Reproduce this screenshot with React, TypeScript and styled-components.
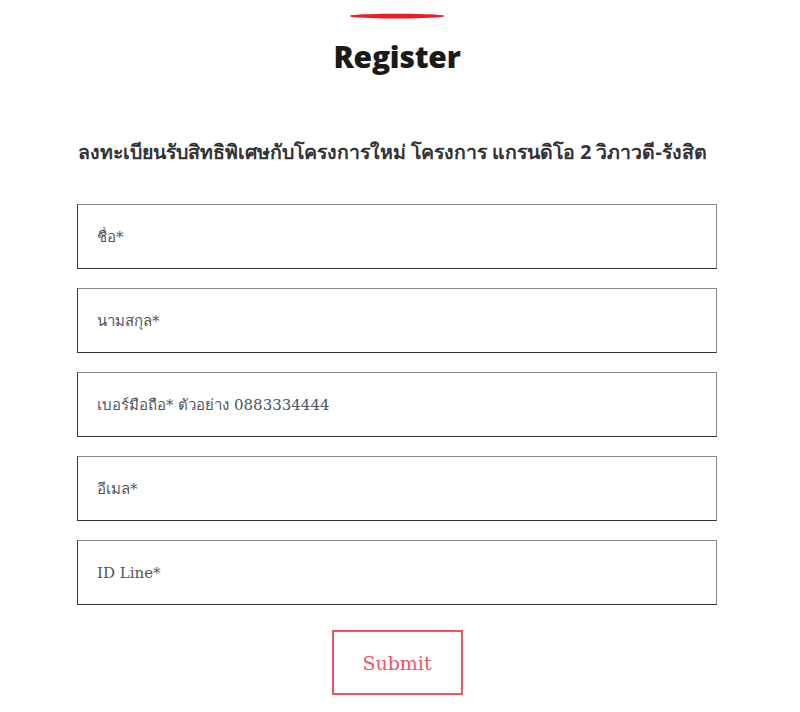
import React from "react";
import styled, { createGlobalStyle } from "styled-components";

const Global = createGlobalStyle`
  html, body { margin: 0; padding: 0; background: #fff; }
  body { font-family: "Liberation Sans", "Noto Sans", sans-serif; }
  * { box-sizing: border-box; }
`;

const Page = styled.div`
  width: 800px;
  height: 712px;
  overflow: hidden;
  display: flex;
  flex-direction: column;
`;

const Header = styled.header`
  display: flex;
  flex-direction: column;
  align-items: center;
  padding-top: 12px;
  margin-left: -6px;
`;

const Accent = styled.svg`
  display: block;
  width: 96px;
  height: 8px;
`;

const Title = styled.h1`
  margin: 17px 0 0;
  font-family: "Open Sans", "Noto Sans", sans-serif;
  font-weight: 800;
  font-size: 30px;
  line-height: 40px;
  color: #1a1a1a;
  letter-spacing: -0.2px;
`;

const Form = styled.form`
  width: 640px;
  margin-left: 77px;
  display: flex;
  flex-direction: column;
`;

const Lead = styled.p`
  margin: 62px 0 0;
  font-family: Tahoma, "Noto Sans", "DejaVu Sans", sans-serif;
  font-weight: 700;
  font-size: 19.5px;
  line-height: 26px;
  color: #333;
  padding-left: 1px;
  white-space: nowrap;
`;

const Fields = styled.div`
  margin-top: 39px;
  display: flex;
  flex-direction: column;
  gap: 19px;
`;

const Input = styled.input`
  display: block;
  width: 640px;
  height: 65px;
  padding: 0 19px;
  border: 1px solid #333;
  border-top-color: #8a8a8a;
  border-right-color: #8a8a8a;
  border-radius: 0;
  background: #fff;
  font-family: "DejaVu Serif", "Liberation Serif", serif;
  font-size: 15px;
  color: #333;
  outline: none;
  &::placeholder {
    color: #4c5560;
    opacity: 1;
  }
`;

const Actions = styled.div`
  display: flex;
  justify-content: center;
  margin-top: 25px;
  margin-left: 0;
`;

const Submit = styled.button`
  width: 131px;
  height: 65px;
  background: #fff;
  border: 2px solid #f2545f;
  color: #f2545f;
  font-family: "DejaVu Serif", "Liberation Serif", serif;
  font-size: 19px;
  cursor: pointer;
`;

const fields = [
  "ชื่อ*",
  "นามสกุล*",
  "เบอร์มือถือ* ตัวอย่าง 0883334444",
  "อีเมล*",
  "ID Line*",
];

export default function App() {
  return (
    <Page>
      <Global />
      <Header>
        <Accent viewBox="0 0 96 8">
          <path
            d="M2 3.2 C20 1.2 76 1.2 94 3.2 C95.5 3.5 95.5 4.4 94 4.8 C76 7.2 20 7.2 2 4.8 C0.5 4.4 0.5 3.5 2 3.2 Z"
            fill="#ec1c24"
          />
        </Accent>
        <Title>Register</Title>
      </Header>
      <Form onSubmit={(e) => e.preventDefault()}>
        <Lead>ลงทะเบียนรับสิทธิพิเศษกับโครงการใหม่ โครงการ แกรนดิโอ 2 วิภาวดี-รังสิต</Lead>
        <Fields>
          {fields.map((f) => (
            <Input key={f} type="text" placeholder={f} />
          ))}
        </Fields>
        <Actions>
          <Submit type="submit">Submit</Submit>
        </Actions>
      </Form>
    </Page>
  );
}
